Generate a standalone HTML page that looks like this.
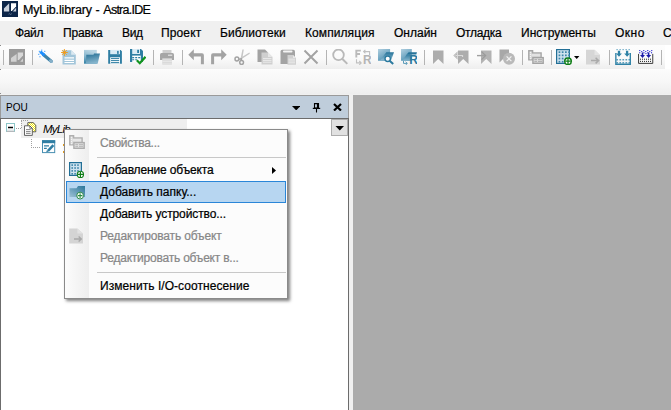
<!DOCTYPE html>
<html lang="ru">
<head>
<meta charset="utf-8">
<title>MyLib.library - Astra.IDE</title>
<style>
html,body{margin:0;padding:0;}
body{width:671px;height:410px;overflow:hidden;background:#f0f0f0;position:relative;
  font-family:"Liberation Sans","DejaVu Sans",sans-serif;font-size:12px;color:#000;-webkit-text-stroke:0.22px currentColor;}
.abs{position:absolute;}
#title{left:0;top:0;width:671px;height:21px;background:#fff;}
#title .t{left:23px;top:3px;font-size:12.5px;line-height:14px;white-space:nowrap;letter-spacing:-0.28px;}
#menu{left:0;top:21px;width:671px;height:24px;background:#f0f0f0;}
#menu span{position:absolute;top:5px;line-height:14px;white-space:nowrap;font-size:12px;}
#tb{left:0;top:45px;width:665px;height:24px;background:linear-gradient(to bottom,#fdfdfd 0,#fafafa 55%,#eeeeee 100%);}
#tbw{left:665px;top:45px;width:6px;height:24px;background:#fff;}
#tb2{left:0;top:69px;width:671px;height:25px;background:linear-gradient(to bottom,#fcfcfc 0,#f7f7f7 50%,#eeeeee 100%);}
.mk{position:absolute;left:0;width:1px;height:1px;background:#8a8a8a;}
.sep{position:absolute;top:5px;width:1px;height:15px;background:#b4b4b4;}
#panel{left:0;top:118px;width:349px;height:300px;background:#fff;border:1px solid #6c6c6c;box-sizing:border-box;}
#phead{left:0;top:95px;width:349px;height:23px;background:#bfcddb;border:1px solid #9a9a9a;border-bottom:0;box-sizing:border-box;}
#phead .t{left:5px;top:4.3px;line-height:14px;font-size:11.5px;-webkit-text-stroke:0;display:inline-block;transform-origin:0 0;transform:scaleX(0.87);}
#gray{left:353px;top:95px;width:318px;height:315px;background:#ababab;}
#ctx{left:64px;top:129px;width:224px;height:170px;background:#fcfcfc;border:1px solid #8a8a8a;box-sizing:border-box;box-shadow:2px 2px 3px rgba(0,0,0,0.5);}
#ctx .gut{position:absolute;left:0;top:0;width:24px;height:168px;background:linear-gradient(90deg,#fcfcfc 0,#eeeeee 100%);}
#ctx .it{position:absolute;left:35px;line-height:14px;font-size:12px;white-space:nowrap;}
#ctx .dis{color:#878787;}
#ctx .hr{position:absolute;left:32px;width:189px;height:1px;background:#c8c8c8;}
#ctx .hl{position:absolute;left:1px;top:51px;width:220px;height:22px;background:#b7d6f1;border:1px solid #2a86d8;box-sizing:border-box;}
#rowhl{left:21px;top:119px;width:166px;height:19px;background:#efefef;}
</style>
</head>
<body>
<div id="title" class="abs">
  <svg class="abs" style="left:2px;top:1px" width="16" height="16" viewBox="0 0 16 16"><rect width="16" height="16" fill="#0c2548"/><path d="M1.9 7.4L7.2 2.3V10.6H1.9Z" fill="#c9d0db"/><path d="M9 2.3H14.1V5.6L9.9 10.1H9Z" fill="#fff"/><path d="M10.8 10.6L14.1 6.8V10.6Z" fill="#c9d0db"/><path d="M6.5 13.2L7.6 12.6L8.3 13.6L9.2 12.8L10 13" stroke="#8090a8" stroke-width="0.6" fill="none"/></svg>
  <div class="abs t"><span style="letter-spacing:-0.15px">MyLib.library</span><span style="position:absolute;left:72.5px">-</span><span style="position:absolute;left:80.3px;letter-spacing:-0.75px">Astra.IDE</span></div>
</div>
<div id="menu" class="abs">
  <span style="left:15px;letter-spacing:-0.35px">Файл</span>
  <span style="left:63px;letter-spacing:-0.17px">Правка</span>
  <span style="left:122px;letter-spacing:-0.3px">Вид</span>
  <span style="left:161px;letter-spacing:0.12px">Проект</span>
  <span style="left:220px;letter-spacing:0.08px">Библиотеки</span>
  <span style="left:305px;letter-spacing:0.08px">Компиляция</span>
  <span style="left:394px">Онлайн</span>
  <span style="left:456px;letter-spacing:-0.3px">Отладка</span>
  <span style="left:521px">Инструменты</span>
  <span style="left:615px;letter-spacing:0.5px">Окно</span>
  <span style="left:663px">Справка</span>
</div>
<div id="tb" class="abs">
<div class="sep" style="left:3px"></div><div class="sep" style="left:32px"></div><div class="sep" style="left:153px"></div><div class="sep" style="left:182px"></div><div class="sep" style="left:326px"></div><div class="sep" style="left:424px"></div><div class="sep" style="left:522px"></div><div class="sep" style="left:551px"></div><div class="sep" style="left:609px"></div><div class="sep" style="left:661px"></div>
<svg class="abs" style="left:9px;top:4px" width="16" height="16" viewBox="0 0 16 16"><rect width="16" height="16" fill="#9a9a9a"/><path d="M2 12.8V8.9L7.6 4.9V12.8Z" fill="#d2d2d2"/><path d="M8.7 3.6H14V6.4L9.9 10.9H8.7Z" fill="#d8d8d8"/><path d="M11.2 12.8L14 9.6V12.8Z" fill="#d2d2d2"/></svg>
<svg class="abs" style="left:38px;top:4px" width="16" height="16" viewBox="0 0 16 16"><path d="M5.5 5.8L13.2 12.3" stroke="#3d82aa" stroke-width="3.2" stroke-linecap="round"/><path d="M12.4 11.7L13.5 12.6" stroke="#86b0c9" stroke-width="2.8" stroke-linecap="round"/><path d="M3.4 3.6L5.4 5.4" stroke="#1e8fff" stroke-width="3" stroke-linecap="square"/><g fill="#3a9cff"><rect x="0.8" y="1.8" width="1.1" height="1.1"/><rect x="3.2" y="0.6" width="1.1" height="1.1"/><rect x="6.2" y="1.8" width="1.1" height="1.1"/><rect x="0.2" y="4.8" width="1.1" height="1.1"/><rect x="1.4" y="7.2" width="1.1" height="1.1"/></g></svg>
<svg class="abs" style="left:61px;top:4px" width="16" height="16" viewBox="0 0 16 16"><path d="M1.5 1.2H10.2L14.8 5.8V15.6H1.5Z" fill="#a3c6da"/><path d="M10.2 1.2L14.8 5.8H10.2Z" fill="#dce9f1"/><g stroke="#fff" stroke-width="1.2"><path d="M3.5 8.9H13M3.5 11.3H13M3.5 13.5H13"/></g><g stroke="#f39a14" stroke-width="0.9"><path d="M3.4 0V7M0 3.5H6.8M1 1.1L5.8 5.9M5.8 1.1L1 5.9"/></g></svg>
<svg class="abs" style="left:84px;top:4px" width="16" height="16" viewBox="0 0 16 16"><defs><linearGradient id="fo1" x1="0.3" y1="0" x2="0" y2="1"><stop offset="0" stop-color="#b8d4e2"/><stop offset="0.45" stop-color="#8ab8cf"/><stop offset="1" stop-color="#2f7ea3"/></linearGradient><linearGradient id="fo2" x1="0" y1="0" x2="0.25" y2="1"><stop offset="0" stop-color="#256f95"/><stop offset="1" stop-color="#86b5cd"/></linearGradient></defs><path d="M0 0.9H12.8V14.7H0Z" fill="url(#fo1)"/><path d="M2.3 5.8H9.5L10 4.6H16L13.7 14.7H1.9Z" fill="url(#fo2)"/></svg>
<svg class="abs" style="left:107px;top:4px" width="16" height="16" viewBox="0 0 16 16"><path d="M1.2 0.9H13.6L14.9 2.2V14.8H1.2Z" fill="#2f7ea3"/><rect x="3.2" y="0.9" width="9.8" height="4.3" fill="#d9ebf5"/><rect x="10.1" y="1.9" width="1.6" height="3" fill="#2f7ea3"/><rect x="3.2" y="8.3" width="9.8" height="6.5" fill="#fff"/><g stroke="#2f7ea3" stroke-width="1"><path d="M4 9.6H12.2M4 11.6H12.2M4 13.6H12.2"/></g></svg>
<svg class="abs" style="left:130px;top:4px" width="16" height="16" viewBox="0 0 16 16"><g transform="translate(-1,-1)"><path d="M1 1H12L14 3V14H1Z" fill="#2f7ea3"/><rect x="3.2" y="1" width="7.8" height="5" fill="#dcecf5"/><rect x="8.2" y="1.8" width="1.8" height="3.2" fill="#2f7ea3"/><rect x="3.2" y="7.6" width="8.6" height="6.4" fill="#fff"/><g stroke="#2f7ea3" stroke-width="1.1" stroke-dasharray="2 1"><path d="M3.2 9.6H11.8M3.2 11.8H8"/></g></g><path d="M6.8 11.2L9.8 14.2L15.5 7.8" stroke="#12931f" stroke-width="2.2" fill="none"/></svg>
<svg class="abs" style="left:159px;top:4px" width="16" height="16" viewBox="0 0 16 16"><rect x="3.5" y="1" width="9" height="3.2" fill="#cfcfcf"/><path d="M1 5.5Q1 4 2.5 4H13.5Q15 4 15 5.5V11H1Z" fill="#a6a6a6"/><rect x="9" y="5.6" width="4.2" height="1.2" fill="#e4e4e4"/><rect x="3.3" y="9.2" width="9.6" height="6.3" fill="#d2d2d2"/><g stroke="#ededed" stroke-width="0.8"><path d="M3.3 11H12.9M3.3 12.6H12.9M3.3 14.2H12.9"/></g></svg>
<svg class="abs" style="left:188px;top:4px" width="16" height="16" viewBox="0 0 16 16"><path d="M0.3 5.8L5.8 0.3V4.3H14Q15.9 4.3 15.9 6.2V15.2H12.9V7.4H5.8V11.3Z" fill="#a3a3a3"/></svg>
<svg class="abs" style="left:210px;top:4px" width="17" height="16" viewBox="0 0 17 16"><path d="M16.7 5.8L11.2 0.3V4.3H3Q1.1 4.3 1.1 6.2V15.2H4.1V7.4H11.2V11.3Z" fill="#a3a3a3"/></svg>
<svg class="abs" style="left:234px;top:4px" width="16" height="16" viewBox="0 0 16 16"><path d="M8.4 0.4L9.8 0.6L8.2 10.2L6.6 9.8Z" fill="#c6c6c6"/><path d="M15.4 3.6L15.8 4.8L6.4 10.8L5.4 9.6Z" fill="#c6c6c6"/><g fill="none" stroke="#a3a3a3"><circle cx="2.9" cy="10" r="1.9" stroke-width="1.5"/><circle cx="7.6" cy="13.5" r="1.9" stroke-width="1.5"/><path d="M4.6 10.4L7.3 9.8L7.6 11.6" stroke-width="1.4"/></g></svg>
<svg class="abs" style="left:257px;top:4px" width="16" height="16" viewBox="0 0 16 16"><path d="M0.5 0.5H8L11 3.5V13H0.5Z" fill="#a3a3a3"/><path d="M4.5 3.5H11L15.5 8V15.5H4.5Z" fill="#cfcfcf"/><path d="M11 3.5L15.5 8H11Z" fill="#e6e6e6"/><g stroke="#ededed" stroke-width="0.9"><path d="M6 9.6H14.5M6 11.4H14.5M6 13.2H14.5"/></g></svg>
<svg class="abs" style="left:280px;top:4px" width="16" height="16" viewBox="0 0 16 16"><path d="M0.5 2.5Q0.5 0.8 2.2 0.8H13.3Q15 0.8 15 2.5V15H0.5Z" fill="#a3a3a3"/><rect x="3" y="1.6" width="9.5" height="1.8" rx="0.9" fill="#f4f4f4"/><path d="M7.5 6H13L16 9V15.8H7.5Z" fill="#d0d0d0"/><path d="M13 6L16 9H13Z" fill="#e8e8e8"/><g stroke="#eeeeee" stroke-width="0.9"><path d="M8.5 10.2H15M8.5 12H15M8.5 13.8H15"/></g></svg>
<svg class="abs" style="left:303px;top:4px" width="16" height="16" viewBox="0 0 16 16"><path d="M1.5 1.5L14.5 14.5M14.5 1.5L1.5 14.5" stroke="#a3a3a3" stroke-width="2"/></svg>
<svg class="abs" style="left:332px;top:4px" width="16" height="16" viewBox="0 0 16 16"><circle cx="6.5" cy="5.9" r="5.3" fill="none" stroke="#b9b9b9" stroke-width="1.8"/><path d="M10.2 9.8L15.3 14.9" stroke="#b9b9b9" stroke-width="2"/></svg>
<svg class="abs" style="left:355px;top:4px" width="16" height="16" viewBox="0 0 16 16"><g fill="none" stroke="#bababa" stroke-width="1.9"><path d="M1.3 8.6V1.6H5.8M1.3 5H5"/></g><g fill="none" stroke="#c0c0c0" stroke-width="1.1"><path d="M8.6 2.6H14.6V6M10.4 0.8L8.6 2.6L10.4 4.4"/><path d="M1.5 10.2V13.9H6M4.3 12L6.2 13.9L4.3 15.8"/></g><text x="7.9" y="15.3" font-family="Liberation Sans,sans-serif" font-weight="bold" font-size="12" fill="#b4b4b4" style="-webkit-text-stroke:0">R</text></svg>
<svg class="abs" style="left:378px;top:4px" width="16" height="16" viewBox="0 0 16 16"><defs><linearGradient id="fs1" x1="0" y1="0" x2="0.6" y2="1"><stop offset="0" stop-color="#b2d0e0"/><stop offset="1" stop-color="#4c90b2"/></linearGradient><linearGradient id="fs2" x1="0" y1="0" x2="0" y2="1"><stop offset="0" stop-color="#27749a"/><stop offset="1" stop-color="#8ab8cf"/></linearGradient></defs><path d="M0 0H12.1V11.8H0Z" fill="url(#fs1)"/><path d="M8.3 3.2H16L13 11.4H2Z" fill="url(#fs2)"/><circle cx="9.7" cy="9.8" r="2.7" fill="#fff" stroke="#2c7a9f" stroke-width="1.4"/><path d="M11.6 11.8L15.2 15" stroke="#2c7a9f" stroke-width="2.1"/></svg>
<svg class="abs" style="left:401px;top:4px" width="16" height="16" viewBox="0 0 16 16"><path d="M0 0H10.8V11.8H0Z" fill="url(#fs1)"/><path d="M7.6 3.2H16L15.3 5.4H5.6Z" fill="#27749a"/><path d="M5.6 5.4H9V11.4H1.6Z" fill="url(#fs2)" opacity="0.85"/><path d="M2.5 11.8V14.4H6M4.6 12.8L6.4 14.4L4.6 16" fill="none" stroke="#5b9bb8" stroke-width="1"/><text x="8.2" y="15.4" font-family="Liberation Sans,sans-serif" font-weight="bold" font-size="12" fill="#2c7a9f" style="-webkit-text-stroke:0">R</text></svg>
<svg class="abs" style="left:430px;top:4px" width="16" height="16" viewBox="0 0 16 16"><path d="M3 1.5H13.5V15L8.2 10L3 15Z" fill="#adadad"/></svg>
<svg class="abs" style="left:453px;top:4px" width="16" height="16" viewBox="0 0 16 16"><path d="M5 1.5H15.5V15L10.2 10L5 15Z" fill="#adadad"/><path d="M0.3 6.5L4.5 2.5V10.5Z" fill="#b5b5b5"/><path d="M2.5 6.5H9.5V8" fill="none" stroke="#dadada" stroke-width="1.2"/><path d="M4.6 3L1 6.5L4.6 10" fill="none" stroke="#cfcfcf" stroke-width="1"/></svg>
<svg class="abs" style="left:476px;top:4px" width="16" height="16" viewBox="0 0 16 16"><path d="M5 1.5H15.5V15L10.2 10L5 15Z" fill="#b3b3b3"/><path d="M1 6.6H9" stroke="#a0a0a0" stroke-width="1.4"/><path d="M5.5 2.6L9.6 6.6L5.5 10.6" fill="none" stroke="#9a9a9a" stroke-width="1.3"/></svg>
<svg class="abs" style="left:499px;top:4px" width="16" height="16" viewBox="0 0 16 16"><path d="M0.5 0.5H10V9L5 9L0.5 13.5Z" fill="#a8a8a8"/><circle cx="10" cy="9.8" r="6" fill="#b9b9b9"/><path d="M7.6 7.4L12.4 12.2M12.4 7.4L7.6 12.2" stroke="#f2f2f2" stroke-width="1.2"/></svg>
<svg class="abs" style="left:528px;top:4px" width="16" height="16" viewBox="0 0 16 16"><path d="M0.8 1.7H4.6V3.9H13.1V10.9H0.8Z" fill="#d6d6d6" stroke="#a6a6a6" stroke-width="1.4"/><g fill="#f6f6f6"><rect x="1.9" y="2.8" width="1.1" height="1.1"/><rect x="1.9" y="4.9" width="1.1" height="1.1"/><rect x="1.9" y="7" width="1.1" height="1.1"/><rect x="1.9" y="9.1" width="1.1" height="1.1"/></g><path d="M3.6 6H12.2" stroke="#ededed" stroke-width="1.1"/><rect x="4.9" y="8.6" width="10.3" height="5.7" fill="#dcdcdc" stroke="#a3a3a3" stroke-width="1.4"/><path d="M6.4 10.6H9M10 10.6H14M6.4 12.4H9M10 12.4H14" stroke="#a8a8a8" stroke-width="0.9"/></svg>
<svg class="abs" style="left:556px;top:4px" width="17" height="16" viewBox="0 0 17 16"><rect x="0.6" y="0.6" width="12.8" height="13.8" fill="#cfe2ee" stroke="#226f96" stroke-width="1.2"/><rect x="2.6" y="2.3" width="1.7" height="1.7" fill="#3d85aa"/><rect x="2.6" y="5.5" width="1.7" height="1.7" fill="#3d85aa"/><rect x="2.6" y="8.7" width="1.7" height="1.7" fill="#3d85aa"/><rect x="2.6" y="11.900000000000002" width="1.7" height="1.7" fill="#3d85aa"/><rect x="5.800000000000001" y="2.3" width="1.7" height="1.7" fill="#3d85aa"/><rect x="5.800000000000001" y="5.5" width="1.7" height="1.7" fill="#3d85aa"/><rect x="5.800000000000001" y="8.7" width="1.7" height="1.7" fill="#3d85aa"/><rect x="5.800000000000001" y="11.900000000000002" width="1.7" height="1.7" fill="#3d85aa"/><rect x="9.0" y="2.3" width="1.7" height="1.7" fill="#3d85aa"/><rect x="9.0" y="5.5" width="1.7" height="1.7" fill="#3d85aa"/><rect x="9.0" y="8.7" width="1.7" height="1.7" fill="#3d85aa"/><rect x="9.0" y="11.900000000000002" width="1.7" height="1.7" fill="#3d85aa"/><rect x="12.200000000000001" y="2.3" width="1.7" height="1.7" fill="#3d85aa"/><rect x="12.200000000000001" y="5.5" width="1.7" height="1.7" fill="#3d85aa"/><rect x="12.200000000000001" y="8.7" width="1.7" height="1.7" fill="#3d85aa"/><rect x="12.200000000000001" y="11.900000000000002" width="1.7" height="1.7" fill="#3d85aa"/><circle cx="12" cy="12.2" r="3.3" fill="#fff" stroke="#0f7d17" stroke-width="1.5"/><path d="M12 9.4V15M9.2 12.2H14.8" stroke="#0f7d17" stroke-width="1.3"/></svg>
<svg class="abs" style="left:574px;top:11px" width="6" height="4" viewBox="0 0 6 4"><path d="M0 0H5.4L2.7 3Z" fill="#000"/></svg>
<svg class="abs" style="left:585px;top:4px" width="16" height="16" viewBox="0 0 16 16"><path d="M1 0.8H9.5L15 6V15.6H1Z" fill="#d6d6d6"/><path d="M9.5 0.8L15 6H9.5Z" fill="#e4e4e4"/><path d="M6 11.6H13.2M10.6 8.8L13.6 11.6L10.6 14.4" fill="none" stroke="#ababab" stroke-width="1.5"/></svg>
<svg class="abs" style="left:615px;top:4px" width="16" height="16" viewBox="0 0 16 16"><rect x="1.35" y="0" width="1.5" height="1.2" fill="#7fb5cd"/><rect x="4.4" y="0" width="1.5" height="1.2" fill="#7fb5cd"/><rect x="7.4" y="0" width="1.5" height="1.2" fill="#7fb5cd"/><rect x="10.45" y="0" width="1.5" height="1.2" fill="#7fb5cd"/><rect x="13.45" y="0" width="1.5" height="1.2" fill="#7fb5cd"/><rect x="1.35" y="10" width="1.7" height="1.5" fill="#5c9fbd"/><rect x="1.35" y="13" width="1.7" height="1.5" fill="#5c9fbd"/><rect x="4.4" y="10" width="1.7" height="1.5" fill="#5c9fbd"/><rect x="4.4" y="13" width="1.7" height="1.5" fill="#5c9fbd"/><rect x="7.4" y="10" width="1.7" height="1.5" fill="#5c9fbd"/><rect x="7.4" y="13" width="1.7" height="1.5" fill="#5c9fbd"/><rect x="10.45" y="10" width="1.7" height="1.5" fill="#5c9fbd"/><rect x="10.45" y="13" width="1.7" height="1.5" fill="#5c9fbd"/><rect x="13.45" y="10" width="1.7" height="1.5" fill="#5c9fbd"/><rect x="13.45" y="13" width="1.7" height="1.5" fill="#5c9fbd"/><path d="M0.85 4.1V15.2H15.3V4.1" fill="none" stroke="#2f82a6" stroke-width="1.35"/><path d="M2.85 1.8H5.15V4.6H6.9L4.0 7.8L1.1 4.6H2.85Z" fill="#2f82a6"/><path d="M10.95 1.8H13.25V4.6H15.0L12.1 7.8L9.2 4.6H10.95Z" fill="#2f82a6"/></svg>
<svg class="abs" style="left:638px;top:4px" width="16" height="16" viewBox="0 0 16 16"><rect x="1.2" y="1" width="1.1" height="1.1" fill="#2a2ad0"/><rect x="3.2" y="2" width="1.1" height="1.1" fill="#2a2ad0"/><rect x="5.2" y="1" width="1.1" height="1.1" fill="#2a2ad0"/><rect x="7.2" y="2" width="1.1" height="1.1" fill="#2a2ad0"/><rect x="9.2" y="1" width="1.1" height="1.1" fill="#2a2ad0"/><rect x="11.2" y="2" width="1.1" height="1.1" fill="#2a2ad0"/><rect x="13.2" y="1" width="1.1" height="1.1" fill="#2a2ad0"/><rect x="1.2" y="3.2" width="1.1" height="1.1" fill="#2a2ad0"/><rect x="5.4" y="3.2" width="1.1" height="1.1" fill="#2a2ad0"/><rect x="7.4" y="4" width="1.1" height="1.1" fill="#2a2ad0"/><rect x="9.2" y="3.2" width="1.1" height="1.1" fill="#2a2ad0"/><rect x="13" y="3.2" width="1.1" height="1.1" fill="#2a2ad0"/><rect x="2.0" y="9.7" width="1" height="1" fill="#222"/><rect x="2.0" y="11.9" width="1" height="1" fill="#222"/><rect x="4.0" y="9.7" width="1" height="1" fill="#222"/><rect x="4.0" y="11.9" width="1" height="1" fill="#222"/><rect x="6.0" y="9.7" width="1" height="1" fill="#222"/><rect x="6.0" y="11.9" width="1" height="1" fill="#222"/><rect x="8.0" y="9.7" width="1" height="1" fill="#222"/><rect x="8.0" y="11.9" width="1" height="1" fill="#222"/><rect x="10.0" y="9.7" width="1" height="1" fill="#222"/><rect x="10.0" y="11.9" width="1" height="1" fill="#222"/><rect x="12.0" y="9.7" width="1" height="1" fill="#222"/><rect x="12.0" y="11.9" width="1" height="1" fill="#222"/><path d="M0.55 4.9V14.4H14.75V4.9" fill="none" stroke="#333" stroke-width="0.95"/><path d="M3.7 3.6H5.3V6H7.0L4.5 8.9L2.0 6H3.7Z" fill="#1c1ca8"/><path d="M9.799999999999999 3.6H11.4V6H13.1L10.6 8.9L8.1 6H9.799999999999999Z" fill="#1c1ca8"/></svg>
</div>
<div id="tbw" class="abs"></div>
<div id="tb2" class="abs"></div>
<div class="mk" style="top:45px"></div><div class="mk" style="top:69px"></div><div class="mk" style="top:93px"></div>
<div id="panel" class="abs"></div>
<div id="phead" class="abs"><div class="abs t">POU</div>
  <svg class="abs" style="left:291px;top:9.7px" width="8.4" height="4.4" viewBox="0 0 8.4 4.4"><path d="M0 0H8.4L4.2 4.4Z" fill="#000"/></svg>
  <svg class="abs" style="left:311px;top:7px" width="9" height="10" viewBox="0 0 9 10"><path d="M2.5 0.6H6.5V5H2.5Z" fill="none" stroke="#000" stroke-width="1.1"/><path d="M5.6 0.6V5" stroke="#000" stroke-width="1.4"/><path d="M0.8 5.4H8.2" stroke="#000" stroke-width="1.2"/><path d="M4.5 5.5V9.5" stroke="#000" stroke-width="1.1"/></svg>
  <svg class="abs" style="left:331.5px;top:6.8px" width="9" height="8.5" viewBox="0 0 9 8.5"><path d="M1 1L8 7.5M8 1L1 7.5" stroke="#000" stroke-width="2.2"/></svg>
</div>
<div id="gray" class="abs"></div>
<div id="rowhl" class="abs"></div>
<div id="tree" class="abs" style="left:0;top:120px;width:348px;height:40px">
  <!-- expander -->
  <svg class="abs" style="left:6px;top:3px" width="10" height="10" viewBox="0 0 10 10"><defs><linearGradient id="exg" x1="0" y1="0" x2="0" y2="1"><stop offset="0" stop-color="#fff"/><stop offset="0.6" stop-color="#fff"/><stop offset="1" stop-color="#cfd6da"/></linearGradient></defs><rect x="0.5" y="0.5" width="8" height="8" fill="url(#exg)" stroke="#8cc6c8"/><path d="M0.5 8.5H8.5" stroke="#b4b8bb" stroke-width="1"/><path d="M2 4.5H7" stroke="#000" stroke-width="1.5"/></svg>
  <!-- dotted lines -->
  <svg class="abs" style="left:14px;top:0" width="30" height="40" viewBox="0 0 30 40"><g stroke="#a0a0a0" stroke-width="1" stroke-dasharray="1 1"><path d="M2 8.5H8"/><path d="M7 0.5H14"/><path d="M7.5 1V8"/><path d="M17.5 19V28"/><path d="M17 27.5H27"/></g></svg>
  <!-- docs icon -->
  <svg class="abs" style="left:23px;top:1px" width="14" height="16" viewBox="0 0 14 16"><defs><pattern id="chk" width="2" height="2" patternUnits="userSpaceOnUse"><rect width="2" height="2" fill="#fff"/><rect width="1" height="1" fill="#f4ea00"/><rect x="1" y="1" width="1" height="1" fill="#f4ea00"/></pattern></defs><path d="M4.8 1.6H10.2L12.8 4.2V10.8H4.8Z" fill="url(#chk)" stroke="#4a4a4a" stroke-width="0.85"/><path d="M1.5 4.8H6.8L9.3 7.3V14.4H1.5Z" fill="#fff" stroke="#4a4a4a" stroke-width="0.85"/><path d="M6.8 4.8V7.3H9.3" fill="none" stroke="#4a4a4a" stroke-width="0.7"/><path d="M3 8.6H7.6M3 10.6H7.6M3 12.4H7.6" stroke="#666" stroke-width="0.8"/></svg>
  <div class="abs" style="left:43px;top:2px;font-style:italic;font-size:11.5px;line-height:14px;letter-spacing:-0.75px;-webkit-text-stroke:0">MyLib</div>
  <!-- edit icon -->
  <svg class="abs" style="left:42px;top:20px" width="14" height="14" viewBox="0 0 14 14"><rect x="0.5" y="0.8" width="12.2" height="11.8" fill="#fff" stroke="#4a90b2" stroke-width="1"/><rect x="0" y="0.2" width="13.2" height="3" fill="#2f7ea3"/><path d="M2 5.9H7M2 8.4H4.8" stroke="#2f7ea3" stroke-width="1.2"/><path d="M11.4 5.2L6 10.8" stroke="#2f7ea3" stroke-width="2.6"/><path d="M4.2 12.3L5 10L6.6 11.6Z" fill="#2f7ea3"/></svg>
  <div class="abs" style="left:63px;top:24px;width:1px;height:2px;background:#e8a020"></div>
  <div class="abs" style="left:63px;top:31px;width:1px;height:1.5px;background:#e8a020"></div>
</div>
<svg class="abs" style="left:331px;top:119px" width="17" height="17" viewBox="0 0 17 17"><rect x="0.5" y="0.5" width="16" height="16" fill="#e1e1e1" stroke="#adadad"/><path d="M4.5 7H13L8.75 11.4Z" fill="#000"/></svg>
<div id="ctx" class="abs">
  <div class="gut"></div>
  <div class="hl"></div>
  <div class="it dis" style="top:6px;letter-spacing:-0.26px">Свойства...</div>
  <div class="hr" style="top:27px"></div>
  <div class="it" style="top:33px;letter-spacing:-0.14px">Добавление объекта</div>
  <svg class="abs" style="left:206.5px;top:36.5px" width="4" height="7" viewBox="0 0 4 7"><path d="M0 0L4 3.5L0 7Z" fill="#000"/></svg>
  <div class="it" style="top:55px">Добавить папку...</div>
  <div class="it" style="top:77px;letter-spacing:-0.1px">Добавить устройство...</div>
  <div class="it dis" style="top:99px;letter-spacing:-0.145px">Редактировать объект</div>
  <div class="it dis" style="top:121px;letter-spacing:-0.22px">Редактировать объект в...</div>
  <div class="hr" style="top:142px"></div>
  <div class="it" style="top:149px;letter-spacing:0.05px">Изменить I/O-соотнесение</div>
  <!-- icons -->
  <svg class="abs" style="left:4px;top:4px" width="16" height="16" viewBox="0 0 16 16"><path d="M0.8 1.7H4.6V3.9H13.1V10.9H0.8Z" fill="#dcdcdc" stroke="#b0b0b0" stroke-width="1.4"/><g fill="#f6f6f6"><rect x="1.9" y="2.8" width="1.1" height="1.1"/><rect x="1.9" y="4.9" width="1.1" height="1.1"/><rect x="1.9" y="7" width="1.1" height="1.1"/><rect x="1.9" y="9.1" width="1.1" height="1.1"/></g><path d="M3.6 6H12.2" stroke="#f0f0f0" stroke-width="1.1"/><rect x="4.9" y="8.6" width="10.3" height="5.7" fill="#e0e0e0" stroke="#adadad" stroke-width="1.4"/><path d="M6.4 10.6H9M10 10.6H14M6.4 12.4H9M10 12.4H14" stroke="#b2b2b2" stroke-width="0.9"/></svg>
  <svg class="abs" style="left:4px;top:32px" width="17" height="17" viewBox="0 0 17 17"><rect x="0.6" y="0.6" width="11.8" height="12.8" fill="#cfe2ee" stroke="#226f96" stroke-width="1.2"/><g fill="#3d85aa"><rect x="2.4" y="2.3" width="1.6" height="1.6"/><rect x="5.3" y="2.3" width="1.6" height="1.6"/><rect x="8.2" y="2.3" width="1.6" height="1.6"/><rect x="2.4" y="5.2" width="1.6" height="1.6"/><rect x="5.3" y="5.2" width="1.6" height="1.6"/><rect x="8.2" y="5.2" width="1.6" height="1.6"/><rect x="2.4" y="8.1" width="1.6" height="1.6"/><rect x="5.3" y="8.1" width="1.6" height="1.6"/><rect x="8.2" y="8.1" width="1.6" height="1.6"/><rect x="2.4" y="11" width="1.6" height="1.6"/><rect x="5.3" y="11" width="1.6" height="1.6"/></g><circle cx="11.4" cy="12.4" r="3.1" fill="#fff" stroke="#0f7d17" stroke-width="1.1"/><path d="M11.4 9.8V15M8.8 12.4H14" stroke="#0f7d17" stroke-width="1.2"/></svg>
  <svg class="abs" style="left:4px;top:55px" width="17" height="15" viewBox="0 0 17 15"><defs><linearGradient id="cf1" x1="1" y1="0" x2="0" y2="1"><stop offset="0" stop-color="#2a7599"/><stop offset="1" stop-color="#9cc0d5"/></linearGradient></defs><path d="M0.5 3.2H7.5L9 1H16V12H0.5Z" fill="url(#cf1)"/><circle cx="11.1" cy="10.6" r="3.4" fill="#fff" stroke="#2b8a45" stroke-width="1"/><path d="M11.1 8.2V13M8.7 10.6H13.5" stroke="#2b8a45" stroke-width="1.1"/></svg>
  <svg class="abs" style="left:4px;top:98px" width="16" height="16" viewBox="0 0 16 16"><path d="M0.2 0.4H8.4L14 5.6V15.6H0.2Z" fill="#d4d4d4"/><path d="M8.4 0.4L14 5.6H8.4Z" fill="#e2e2e2"/><path d="M5 11H12M9.6 8.4L12.4 11L9.6 13.6" fill="none" stroke="#a8a8a8" stroke-width="1.3"/></svg>
</div>
</body>
</html>
